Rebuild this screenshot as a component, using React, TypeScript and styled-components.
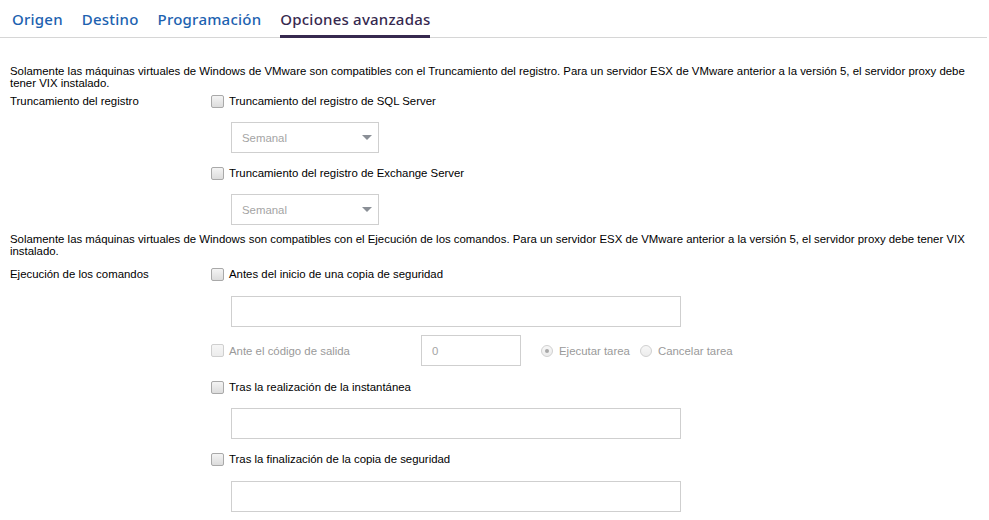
import React from 'react';
import styled, { createGlobalStyle, css } from 'styled-components';

const GlobalStyle = createGlobalStyle`
  html, body {
    margin: 0;
    padding: 0;
    background: #ffffff;
  }
  body {
    font-family: "Liberation Sans", Arial, sans-serif;
    font-size: 11.4px;
    color: #000;
  }
`;

const Page = styled.div`
  width: 989px;
  height: 520px;
  overflow: hidden;
  background: #fff;
`;

const TabBar = styled.div`
  display: flex;
  height: 38px;
  border-bottom: 1px solid #d6d6d6;
  box-sizing: border-box;
  padding-left: 12px;
  margin-right: 2px;
`;

const Tab = styled.div<{ active?: boolean }>`
  display: flex;
  align-items: center;
  height: 38px;
  box-sizing: border-box;
  padding-bottom: 1px;
  margin-right: 19px;
  font-family: "Noto Sans", "Liberation Sans", sans-serif;
  font-size: 15px;
  font-weight: 500;
  letter-spacing: 0.22px;
  color: #1d62b0;
  cursor: pointer;

  ${p =>
    p.active &&
    css`
      color: #36294f;
      border-bottom: 3px solid #36294f;
      padding-top: 2px;
      padding-bottom: 0;
      margin-bottom: -1px;
    `}
`;

const Content = styled.div`
  padding: 27px 10px 0 10px;
`;

const Notice = styled.p<{ gapTop?: number }>`
  margin: ${p => p.gapTop ?? 0}px 0 0 0;
  line-height: 12px;
  width: 965px;
`;

const Section = styled.div<{ gapTop?: number }>`
  display: grid;
  grid-template-columns: 201px 1fr;
  margin-top: ${p => p.gapTop ?? 0}px;
`;

const FieldLabel = styled.div`
  height: 24px;
  display: flex;
  align-items: center;
`;

const Controls = styled.div`
  display: flex;
  flex-direction: column;
`;

const CheckRow = styled.label<{ disabled?: boolean; gapTop?: number }>`
  display: flex;
  align-items: center;
  height: 24px;
  margin-top: ${p => p.gapTop ?? 0}px;
  color: ${p => (p.disabled ? '#9a9a9a' : '#000')};
  white-space: nowrap;
`;

const Box = styled.span<{ disabled?: boolean }>`
  width: 11px;
  height: 11px;
  border: 1px solid ${p => (p.disabled ? '#cfcfcf' : '#a9a9a9')};
  border-radius: 2px;
  background: ${p =>
    p.disabled
      ? 'linear-gradient(#f6f6f6, #ececec)'
      : 'linear-gradient(#f4f4f4, #dcdcdc)'};
  margin-right: 5px;
  flex-shrink: 0;
`;

const Select = styled.div<{ gapTop: number }>`
  margin: ${p => p.gapTop}px 0 0 20px;
  box-sizing: border-box;
  width: 148px;
  height: 31px;
  border: 1px solid #cfcfcf;
  display: flex;
  align-items: center;
  justify-content: space-between;
  padding: 0 6px 0 10px;
  color: #a4a4a4;
`;

const Caret = styled.span`
  width: 0;
  height: 0;
  border-left: 5px solid transparent;
  border-right: 5px solid transparent;
  border-top: 5px solid #8a8f96;
`;

const TextField = styled.div<{ gapTop: number; width?: number }>`
  margin: ${p => p.gapTop}px 0 0 20px;
  box-sizing: border-box;
  width: ${p => p.width ?? 450}px;
  height: 31px;
  border: 1px solid #cfcfcf;
`;

const ExitRow = styled.div`
  display: grid;
  grid-template-columns: 210px 100px auto;
  align-items: center;
  margin-top: 8px;
  height: 31px;
`;

const NumberField = styled.div`
  box-sizing: border-box;
  width: 100px;
  height: 31px;
  border: 1px solid #cfcfcf;
  display: flex;
  align-items: center;
  padding-left: 10px;
  color: #a4a4a4;
`;

const RadioGroup = styled.div`
  display: flex;
  align-items: center;
  margin-left: 20px;
  color: #9a9a9a;
`;

const RadioOption = styled.span`
  display: flex;
  align-items: center;
  margin-right: 10px;
`;

const RadioDot = styled.span<{ checked?: boolean }>`
  width: 10px;
  height: 10px;
  border-radius: 50%;
  border: 1px solid #d0d0d0;
  background: linear-gradient(#f7f7f7, #ececec);
  margin-right: 6px;
  display: flex;
  align-items: center;
  justify-content: center;

  &::after {
    content: '';
    width: 4px;
    height: 4px;
    border-radius: 50%;
    background: ${p => (p.checked ? '#a8a8a8' : 'transparent')};
  }
`;

const Check: React.FC<{ label: string; disabled?: boolean; gapTop?: number }> = ({
  label,
  disabled,
  gapTop,
}) => (
  <CheckRow disabled={disabled} gapTop={gapTop}>
    <Box disabled={disabled} />
    {label}
  </CheckRow>
);

const tabs = ['Origen', 'Destino', 'Programación', 'Opciones avanzadas'];

export default function App() {
  return (
    <Page>
      <GlobalStyle />
      <TabBar>
        {tabs.map(t => (
          <Tab key={t} active={t === 'Opciones avanzadas'}>
            {t}
          </Tab>
        ))}
      </TabBar>
      <Content>
        <Notice>
          Solamente las máquinas virtuales de Windows de VMware son compatibles con el
          Truncamiento del registro. Para un servidor ESX de VMware anterior a la versión 5,
          el servidor proxy debe tener VIX instalado.
        </Notice>
        <Section>
          <FieldLabel>Truncamiento del registro</FieldLabel>
          <Controls>
            <Check label="Truncamiento del registro de SQL Server" />
            <Select gapTop={9}>
              Semanal
              <Caret />
            </Select>
            <Check label="Truncamiento del registro de Exchange Server" gapTop={8} />
            <Select gapTop={9}>
              Semanal
              <Caret />
            </Select>
          </Controls>
        </Section>
        <Notice gapTop={8}>
          Solamente las máquinas virtuales de Windows son compatibles con el Ejecución de los
          comandos. Para un servidor ESX de VMware anterior a la versión 5, el servidor proxy
          debe tener VIX instalado.
        </Notice>
        <Section gapTop={5}>
          <FieldLabel>Ejecución de los comandos</FieldLabel>
          <Controls>
            <Check label="Antes del inicio de una copia de seguridad" />
            <TextField gapTop={10} />
            <ExitRow>
              <CheckRow disabled>
                <Box disabled />
                Ante el código de salida
              </CheckRow>
              <NumberField>0</NumberField>
              <RadioGroup>
                <RadioOption>
                  <RadioDot checked />
                  Ejecutar tarea
                </RadioOption>
                <RadioOption>
                  <RadioDot />
                  Cancelar tarea
                </RadioOption>
              </RadioGroup>
            </ExitRow>
            <Check label="Tras la realización de la instantánea" gapTop={9} />
            <TextField gapTop={9} />
            <Check label="Tras la finalización de la copia de seguridad" gapTop={8} />
            <TextField gapTop={10} />
          </Controls>
        </Section>
      </Content>
    </Page>
  );
}
